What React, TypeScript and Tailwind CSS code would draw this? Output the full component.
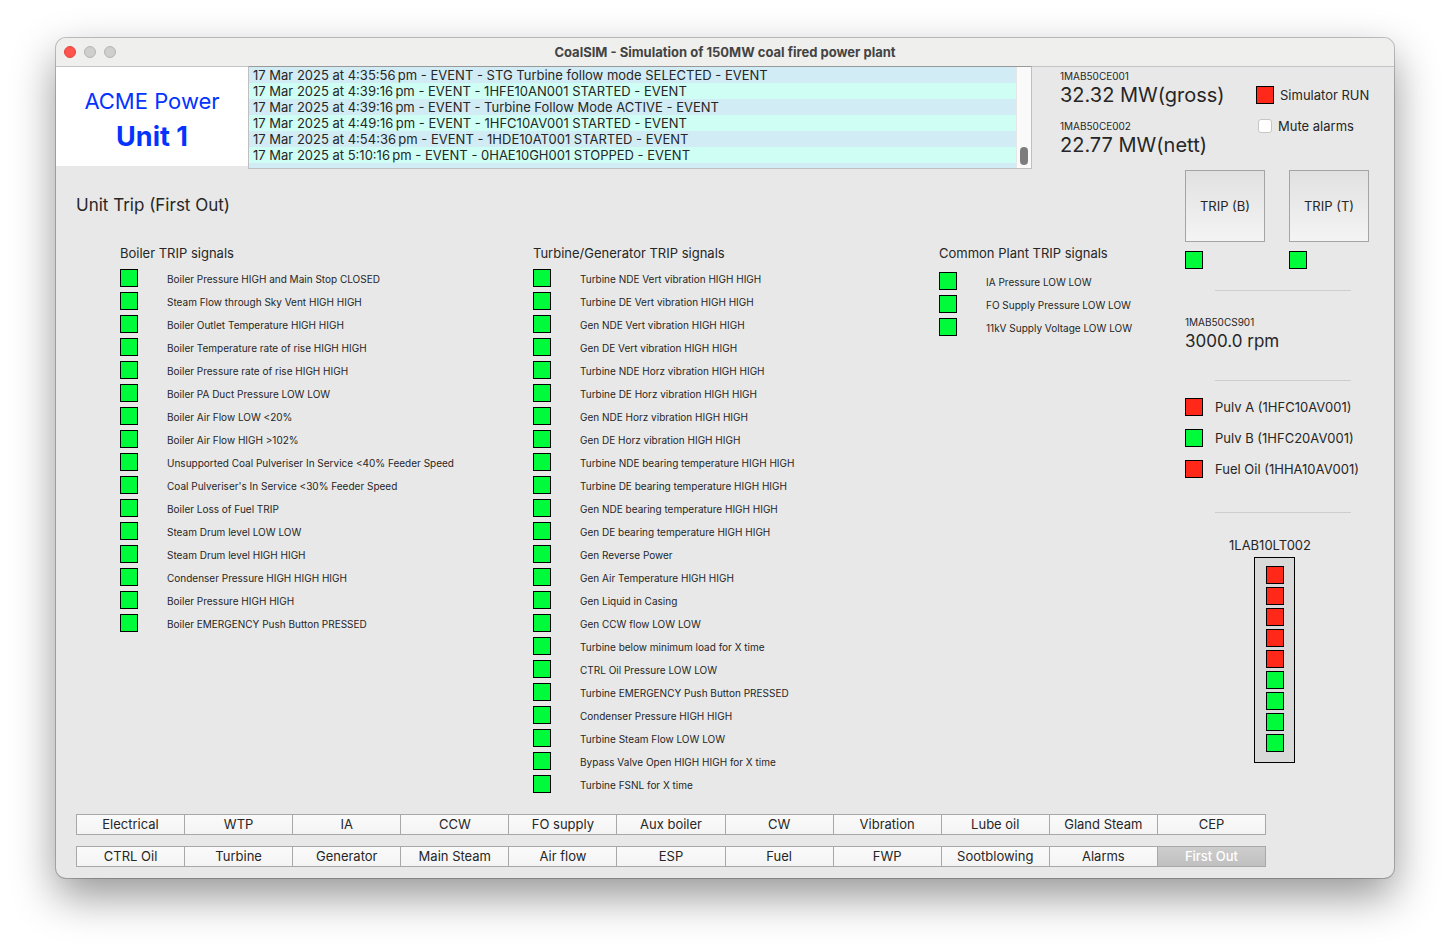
import React, { useState } from "react";

const events = [
  "17 Mar 2025 at 4:35:56\u202fpm - EVENT - STG Turbine follow mode SELECTED - EVENT",
  "17 Mar 2025 at 4:39:16\u202fpm - EVENT - 1HFE10AN001 STARTED - EVENT",
  "17 Mar 2025 at 4:39:16\u202fpm - EVENT - Turbine Follow Mode ACTIVE - EVENT",
  "17 Mar 2025 at 4:49:16\u202fpm - EVENT - 1HFC10AV001 STARTED - EVENT",
  "17 Mar 2025 at 4:54:36\u202fpm - EVENT - 1HDE10AT001 STARTED - EVENT",
  "17 Mar 2025 at 5:10:16\u202fpm - EVENT - 0HAE10GH001 STOPPED - EVENT",
];

const boilerSignals = [
  "Boiler Pressure HIGH and Main Stop CLOSED",
  "Steam Flow through Sky Vent HIGH HIGH",
  "Boiler Outlet Temperature HIGH HIGH",
  "Boiler Temperature rate of rise HIGH HIGH",
  "Boiler Pressure rate of rise HIGH HIGH",
  "Boiler PA Duct Pressure LOW LOW",
  "Boiler Air Flow LOW <20%",
  "Boiler Air Flow HIGH >102%",
  "Unsupported Coal Pulveriser In Service <40% Feeder Speed",
  "Coal Pulveriser's In Service <30% Feeder Speed",
  "Boiler Loss of Fuel TRIP",
  "Steam Drum level LOW LOW",
  "Steam Drum level HIGH HIGH",
  "Condenser Pressure HIGH HIGH HIGH",
  "Boiler Pressure HIGH HIGH",
  "Boiler EMERGENCY Push Button PRESSED",
];

const turbineSignals = [
  "Turbine NDE Vert vibration HIGH HIGH",
  "Turbine DE Vert vibration HIGH HIGH",
  "Gen NDE Vert vibration HIGH HIGH",
  "Gen DE Vert vibration HIGH HIGH",
  "Turbine NDE Horz vibration HIGH HIGH",
  "Turbine DE Horz vibration HIGH HIGH",
  "Gen NDE Horz vibration HIGH HIGH",
  "Gen DE Horz vibration HIGH HIGH",
  "Turbine NDE bearing temperature HIGH HIGH",
  "Turbine DE bearing temperature HIGH HIGH",
  "Gen NDE bearing temperature HIGH HIGH",
  "Gen DE bearing temperature HIGH HIGH",
  "Gen Reverse Power",
  "Gen Air Temperature HIGH HIGH",
  "Gen Liquid in Casing",
  "Gen CCW flow LOW LOW",
  "Turbine below minimum load for X time",
  "CTRL Oil Pressure LOW LOW",
  "Turbine EMERGENCY Push Button PRESSED",
  "Condenser Pressure HIGH HIGH",
  "Turbine Steam Flow LOW LOW",
  "Bypass Valve Open HIGH HIGH for X time",
  "Turbine FSNL for X time",
];

const commonSignals = [
  "IA Pressure LOW LOW",
  "FO Supply Pressure LOW LOW",
  "11kV Supply Voltage LOW LOW",
];

const navRows = [
  ["Electrical", "WTP", "IA", "CCW", "FO supply", "Aux boiler", "CW", "Vibration", "Lube oil", "Gland Steam", "CEP"],
  ["CTRL Oil", "Turbine", "Generator", "Main Steam", "Air flow", "ESP", "Fuel", "FWP", "Sootblowing", "Alarms", "First Out"],
];

const drumLevel = [true, true, true, true, true, false, false, false, false];

function Led({ red = false }: { red?: boolean }) {
  return (
    <span
      className={`block size-[18px] shrink-0 border border-black ${red ? "bg-[#ff2819]" : "bg-[#00fb3b]"}`}
    />
  );
}

function SignalList({ title, signals, className = "" }: { title: string; signals: string[]; className?: string }) {
  return (
    <section>
      <h2 className="text-[13px] leading-5">{title}</h2>
      <ul className={className}>
        {signals.map((s) => (
          <li key={s} className="flex h-[23px] items-start gap-[29px]">
            <Led />
            <span className="text-[10px] leading-[21px] whitespace-nowrap">{s}</span>
          </li>
        ))}
      </ul>
    </section>
  );
}

function Reading({ tag, value, className }: { tag: string; value: string; className: string }) {
  return (
    <div>
      <p className="text-[10px] leading-[14px]">{tag}</p>
      <p className={`leading-6 whitespace-nowrap ${className}`}>{value}</p>
    </div>
  );
}

function Divider() {
  return <hr className="mr-[43px] ml-[30px] border-t border-[#cdcdcd]" />;
}

export default function App() {
  const [page, setPage] = useState("First Out");
  const [muted, setMuted] = useState(false);

  return (
    <div className="min-h-screen bg-white px-14 pt-[38px] pb-[74px] font-['Inter',sans-serif] text-[#262626]">
      <div className="overflow-hidden rounded-[10px] bg-[#e8e8e8] shadow-[0_0_0_1px_rgba(0,0,0,0.22),0_18px_44px_rgba(0,0,0,0.42)]">
        <header className="grid h-[29px] grid-cols-[1fr_auto_1fr] items-center border-b border-[#c4c4c4] bg-[#efefed] px-2">
          <div className="flex gap-2">
            <button aria-label="Close" className="size-3 rounded-full border border-[#e2443f] bg-[#ff544d]" />
            <button aria-label="Minimise" className="size-3 rounded-full border border-[#b5b5b5] bg-[#cfcfcd]" />
            <button aria-label="Zoom" className="size-3 rounded-full border border-[#b5b5b5] bg-[#cfcfcd]" />
          </div>
          <h1 className="text-[13px] leading-4 font-bold text-[#434343]">
            CoalSIM - Simulation of 150MW coal fired power plant
          </h1>
        </header>

        <div className="flex items-start">
          <div className="flex h-[99px] w-48 shrink-0 flex-col items-center justify-center bg-white pt-2 text-[#0433ff]">
            <p className="text-[22px] leading-8">ACME Power</p>
            <p className="text-[27px] leading-10 font-bold">Unit 1</p>
          </div>

          <div className="-mt-px flex h-[103px] min-w-0 flex-1 border border-t-[#999999] border-r-[#bfbfbf] border-b-[#bfbfbf] border-l-[#bfbfbf] bg-[#d1ecf4]">
            <ul className="min-w-0 flex-1 overflow-hidden text-[13px] leading-4 whitespace-nowrap">
              {events.map((e, i) => (
                <li key={i} className="pl-1 odd:bg-[#d1ecf4] even:bg-[#cffff4]">
                  {e}
                </li>
              ))}
            </ul>
            <div className="flex w-[15px] flex-col items-center justify-end border-l border-[#e6e6e6] bg-[#fafafa] pb-[3px]">
              <span className="h-[18px] w-2 rounded-full bg-[#7d7d7d]" />
            </div>
          </div>

          <div className="flex w-[224px] shrink-0 flex-col gap-3 pt-[2px] pl-7">
            <Reading tag="1MAB50CE001" value="32.32 MW(gross)" className="text-[20px]" />
            <Reading tag="1MAB50CE002" value="22.77 MW(nett)" className="text-[20px]" />
          </div>

          <div className="flex w-[138px] shrink-0 flex-col gap-[13px] pt-[19px] text-[13px] leading-[18px]">
            <div className="flex gap-[6px]">
              <Led red />
              <span>Simulator RUN</span>
            </div>
            <label className="flex items-center gap-[6px] pl-[2px]">
              <input
                type="checkbox"
                checked={muted}
                onChange={(e) => setMuted(e.target.checked)}
                className="size-[14px] appearance-none rounded-[3px] border border-[#c6c6c6] bg-white checked:bg-[#0a7aff]"
              />
              Mute alarms
            </label>
          </div>
        </div>

        <div className="flex">
          <main className="min-w-0 flex-1 pt-[22px] pl-5">
            <h2 className="text-[17px] leading-7">Unit Trip (First Out)</h2>
            <div className="mt-6 grid grid-cols-[413fr_406fr_246fr] pl-11">
              <SignalList title="Boiler TRIP signals" signals={boilerSignals} className="mt-[6px]" />
              <SignalList title="Turbine/Generator TRIP signals" signals={turbineSignals} className="mt-[6px]" />
              <SignalList title="Common Plant TRIP signals" signals={commonSignals} className="mt-[9px]" />
            </div>
          </main>

          <aside className="w-[209px] shrink-0 pt-px text-[13px]">
            <div className="flex gap-6">
              {["TRIP (B)", "TRIP (T)"].map((t) => (
                <div key={t} className="flex flex-col gap-[9px]">
                  <button className="h-[72px] w-20 border border-[#a4a4a4] bg-linear-to-b from-[#e1e1e1] to-[#f4f4f4] pt-[2px]">
                    {t}
                  </button>
                  <Led />
                </div>
              ))}
            </div>
            <div className="pt-[21px] pb-6">
              <Divider />
            </div>
            <Reading tag="1MAB50CS901" value="3000.0 rpm" className="text-[17px]" />
            <div className="pt-[27px] pb-[17px]">
              <Divider />
            </div>
            <ul className="flex flex-col gap-[13px] leading-[18px]">
              <li className="flex gap-3">
                <Led red />
                Pulv A (1HFC10AV001)
              </li>
              <li className="flex gap-3">
                <Led />
                Pulv B (1HFC20AV001)
              </li>
              <li className="flex gap-3">
                <Led red />
                Fuel Oil (1HHA10AV001)
              </li>
            </ul>
            <div className="pt-[34px] pb-[23px]">
              <Divider />
            </div>
            <div className="flex w-[170px] flex-col items-center gap-[3px]">
              <p className="leading-[18px]">1LAB10LT002</p>
              <div className="ml-[9px] flex flex-col gap-[3px] border border-black bg-[#d9d9d9] pt-2 pr-[10px] pb-[10px] pl-[11px]">
                {drumLevel.map((red, i) => (
                  <Led key={i} red={red} />
                ))}
              </div>
            </div>
          </aside>
        </div>

        <nav className="flex flex-col gap-[11px] pt-4 pr-32 pb-[11px] pl-5">
          {navRows.map((row, r) => (
            <div key={r} className="grid grid-cols-11 border-l border-[#a8a8a8]">
              {row.map((name) => (
                <button
                  key={name}
                  onClick={() => setPage(name)}
                  className={`h-[21px] border-y border-r border-[#a8a8a8] text-[13px] leading-[19px] ${
                    page === name
                      ? "bg-linear-to-b from-[#cdcdcd] to-[#c0c0c0] font-medium text-white"
                      : "bg-linear-to-b from-[#fafafa] to-[#f4f4f4]"
                  }`}
                >
                  {name}
                </button>
              ))}
            </div>
          ))}
        </nav>
      </div>
    </div>
  );
}
